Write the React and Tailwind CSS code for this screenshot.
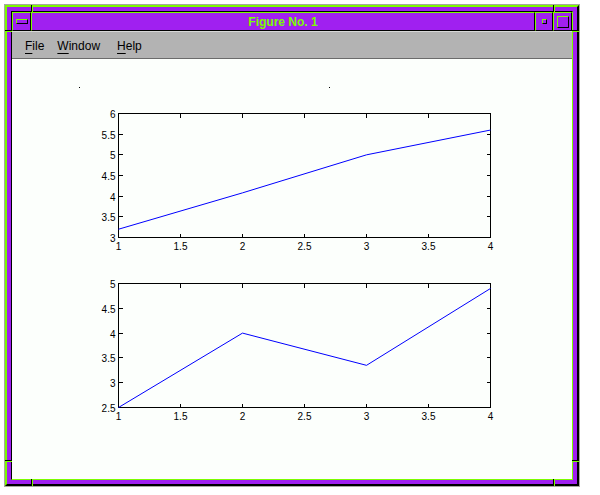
import React from "react";

// ─── Plot ────────────────────────────────────────────────────────────────────
function Plot({ top, yMin, yMax, data, dots = [] }) {
  const L = 106.5;
  const R = 478.5;
  const T = top + 0.5;
  const B = top + 124.5;
  const sx = (v) => L + ((v - 1) / 3) * (R - L);
  const sy = (v) => B - ((v - yMin) / (yMax - yMin)) * (B - T);
  const px = (n) => Math.floor(n) + 0.5;

  const xTicks = [1, 1.5, 2, 2.5, 3, 3.5, 4];
  const yTicks = [];
  for (let v = yMin; v <= yMax + 0.001; v += 0.5) yTicks.push(+v.toFixed(1));

  const pts = data.map(([x, y]) => `${sx(x)},${sy(y)}`).join(" ");

  return (
    <svg width="560" height="175" className="block shrink-0">
      {dots.map(([x, y]) => (
        <rect key={x} x={x} y={y} width="1" height="1" fill="#000" />
      ))}
      <g shapeRendering="crispEdges" stroke="#000" strokeWidth="1">
        <rect x={L} y={T} width={R - L} height={B - T} fill="none" />
        {xTicks.map((v) => (
          <g key={v}>
            <line x1={px(sx(v))} y1={B} x2={px(sx(v))} y2={B - 4} />
            <line x1={px(sx(v))} y1={T} x2={px(sx(v))} y2={T + 4} />
          </g>
        ))}
        {yTicks.map((v) => (
          <g key={v}>
            <line x1={L} y1={px(sy(v))} x2={L + 4} y2={px(sy(v))} />
            <line x1={R} y1={px(sy(v))} x2={R - 4} y2={px(sy(v))} />
          </g>
        ))}
      </g>
      <polyline points={pts} fill="none" stroke="#0000ff" strokeWidth="1" />
      <g fontFamily="'Liberation Sans', Arial, sans-serif" fontSize="10" fill="#000">
        {xTicks.map((v) => (
          <text key={v} x={sx(v)} y={B + 12} textAnchor="middle">
            {String(v)}
          </text>
        ))}
        {yTicks.map((v) => (
          <text key={v} x={L - 3} y={sy(v) + 4.5} textAnchor="end">
            {String(v)}
          </text>
        ))}
      </g>
    </svg>
  );
}

// ─── Bevelled title bar button ───────────────────────────────────────────────
function Bevel({ className = "", children }) {
  return (
    <div
      className={`flex items-center justify-center border-t border-l border-t-[#7cfc00] border-l-[#7cfc00] border-b border-r border-b-black border-r-black bg-[#a020f0] ${className}`}
    >
      {children}
    </div>
  );
}

function MenuItem({ first, rest, className = "" }) {
  return (
    <span className={className}>
      <span className="underline underline-offset-[3px] decoration-1">{first}</span>
      {rest}
    </span>
  );
}

export default function App() {
  return (
    <div className="w-[600px] h-[495px] bg-white pt-1 pl-1">
      <div className="relative w-[576px] h-[483px] border border-[#a8a8a0]">
        {/* frame bevel */}
        <div className="h-full border-t-2 border-l-2 border-t-[#7cfc00] border-l-[#7cfc00] border-b-2 border-r-2 border-b-black border-r-black bg-[#a020f0] p-1">
          <div className="h-full flex flex-col border-t border-l border-t-black border-l-black border-b border-r border-b-[#7cfc00] border-r-[#7cfc00]">
            {/* title bar */}
            <div className="flex h-[19px] shrink-0">
              <Bevel className="w-[19px]">
                <div className="w-[12px] h-[5px] border-t border-l border-t-[#7cfc00] border-l-[#7cfc00] border-b border-r border-b-black border-r-black" />
              </Bevel>
              <Bevel className="flex-1">
                <span className="font-['Liberation_Sans',Arial,sans-serif] font-bold text-[12px] leading-none text-[#7cfc00] pt-[1px]">
                  Figure No. 1
                </span>
              </Bevel>
              <Bevel className="w-[18px]">
                <div className="w-[5px] h-[5px] border-t border-l border-t-[#7cfc00] border-l-[#7cfc00] border-b border-r border-b-black border-r-black" />
              </Bevel>
              <Bevel className="w-[19px]">
                <div className="w-[12px] h-[12px] border-t border-l border-t-[#7cfc00] border-l-[#7cfc00] border-b border-r border-b-black border-r-black" />
              </Bevel>
            </div>

            {/* menu bar */}
            <div className="h-[28px] shrink-0 bg-[#b3b3b3] border-t border-t-[#d8d8d8] border-b border-b-[#6b6b6b] flex items-center pl-[13px] pt-[2px] font-['Liberation_Sans',Arial,sans-serif] text-[12px] text-black">
              <MenuItem first="F" rest="ile" />
              <MenuItem first="W" rest="indow" className="ml-[13px]" />
              <MenuItem first="H" rest="elp" className="ml-[17px]" />
            </div>

            {/* figure canvas */}
            <div className="flex-1 bg-[#fcfffc] flex flex-col pt-[20px] overflow-hidden">
              <Plot
                top={34}
                yMin={3}
                yMax={6}
                data={[[1, 3.2], [2, 4.08], [3, 5], [4, 5.6]]}
                dots={[[67, 8], [317, 8]]}
              />
              <Plot
                top={29}
                yMin={2.5}
                yMax={5}
                data={[[1, 2.5], [2, 4], [3, 3.35], [4, 4.9]]}
              />
            </div>
          </div>
        </div>

        {/* frame corner dividers */}
        <div className="absolute left-[26px] top-0 w-[2px] h-[7px] border-l border-l-black border-r border-r-[#7cfc00]" />
        <div className="absolute left-[548px] top-0 w-[2px] h-[7px] border-l border-l-black border-r border-r-[#7cfc00]" />
        <div className="absolute left-[26px] bottom-0 w-[2px] h-[7px] border-l border-l-black border-r border-r-[#7cfc00]" />
        <div className="absolute left-[548px] bottom-0 w-[2px] h-[7px] border-l border-l-black border-r border-r-[#7cfc00]" />
        <div className="absolute left-0 top-[25px] w-[7px] h-[2px] border-t border-t-black border-b border-b-[#7cfc00]" />
        <div className="absolute right-0 top-[25px] w-[7px] h-[2px] border-t border-t-black border-b border-b-[#7cfc00]" />
        <div className="absolute left-0 top-[455px] w-[7px] h-[2px] border-t border-t-black border-b border-b-[#7cfc00]" />
        <div className="absolute right-0 top-[455px] w-[7px] h-[2px] border-t border-t-black border-b border-b-[#7cfc00]" />
      </div>
    </div>
  );
}
